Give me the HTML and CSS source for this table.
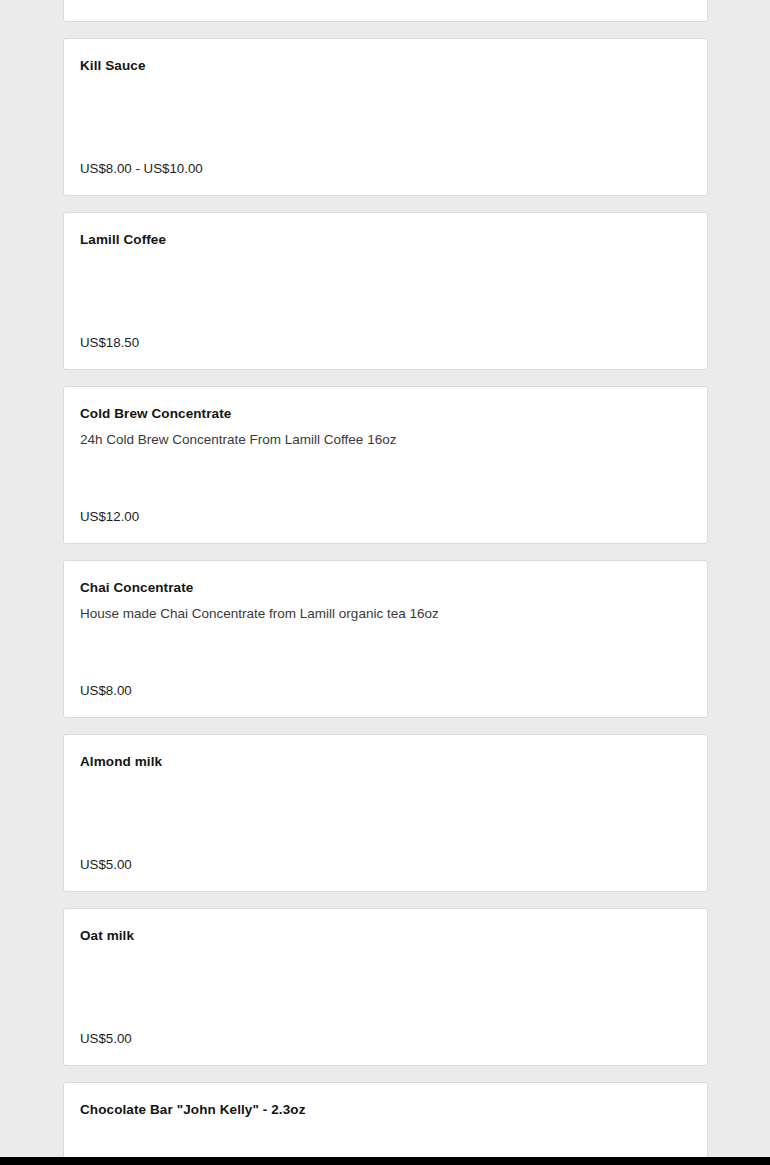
FILE: index.html
```html
<!DOCTYPE html>
<html lang="en">
<head>
<meta charset="utf-8">
<title>Menu</title>
<link rel="stylesheet" href="styles.css">
</head>
<body>
<main class="list">
  <div class="card">
    <div class="title">Hot Sauce</div>
    <div class="price">US$6.00</div>
  </div>
  <div class="card">
    <div class="title">Kill Sauce</div>
    <div class="price">US$8.00 - US$10.00</div>
  </div>
  <div class="card">
    <div class="title">Lamill Coffee</div>
    <div class="price">US$18.50</div>
  </div>
  <div class="card">
    <div class="title">Cold Brew Concentrate</div>
    <div class="desc">24h Cold Brew Concentrate From Lamill Coffee 16oz</div>
    <div class="price">US$12.00</div>
  </div>
  <div class="card">
    <div class="title">Chai Concentrate</div>
    <div class="desc">House made Chai Concentrate from Lamill organic tea 16oz</div>
    <div class="price">US$8.00</div>
  </div>
  <div class="card">
    <div class="title">Almond milk</div>
    <div class="price">US$5.00</div>
  </div>
  <div class="card">
    <div class="title">Oat milk</div>
    <div class="price">US$5.00</div>
  </div>
  <div class="card">
    <div class="title">Chocolate Bar "John Kelly" - 2.3oz</div>
    <div class="price">US$6.00</div>
  </div>
</main>
<div class="bottom-bar"></div>
</body>
</html>
```
FILE: styles.css
```css
html, body {
  margin: 0;
  padding: 0;
  background: #ebebec;
  overflow: hidden;
  height: 1165px;
}
body {
  font-family: "Liberation Sans", Arial, sans-serif;
  color: #222;
}
.list {
  margin: -136px 0 0 63px;
  width: 645px;
  display: flex;
  flex-direction: column;
  gap: 16px;
}
.card {
  box-sizing: border-box;
  height: 158px;
  background: #fff;
  border: 1px solid #dadada;
  border-radius: 3px;
  padding: 16px;
  display: flex;
  flex-direction: column;
}
.title {
  font-size: 13.5px;
  font-weight: bold;
  line-height: 22px;
  color: #141414;
  letter-spacing: 0.1px;
}
.desc {
  margin-top: 5px;
  font-size: 13.5px;
  line-height: 20px;
  color: #3a3a3a;
}
.price {
  margin-top: auto;
  font-size: 13.3px;
  line-height: 20px;
  color: #1e1e1e;
}
.bottom-bar {
  position: fixed;
  left: 0;
  right: 0;
  bottom: 0;
  height: 8px;
  background: #000;
}
```
